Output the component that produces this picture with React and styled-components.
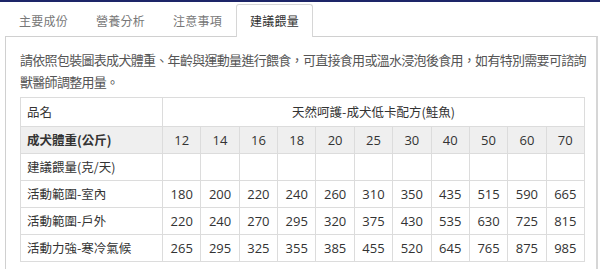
import React from 'react';
import styled, { createGlobalStyle } from 'styled-components';

const GlobalStyle = createGlobalStyle`
  html, body {
    margin: 0;
    padding: 0;
    background: #fff;
  }
  body {
    font-family: "Noto Sans CJK TC", sans-serif;
    color: #333;
  }
`;

const tabs = ['主要成份', '營養分析', '注意事項', '建議餵量'];
const weights = [12, 14, 16, 18, 20, 25, 30, 40, 50, 60, 70];
const rows = [
  { label: '活動範圍-室內', values: [180, 200, 220, 240, 260, 310, 350, 435, 515, 590, 665] },
  { label: '活動範圍-戶外', values: [220, 240, 270, 295, 320, 375, 430, 535, 630, 725, 815] },
  { label: '活動力強-寒冷氣候', values: [265, 295, 325, 355, 385, 455, 520, 645, 765, 875, 985] },
];

function App() {
  return (
    <Page>
      <GlobalStyle />
      <TopBar />
      <Content>
        <TabList>
          {tabs.map((t, i) => (
            <Tab key={t} $active={i === tabs.length - 1}>{t}</Tab>
          ))}
        </TabList>
        <Panel>
          <Intro>
            <IntroLine>請依照包裝圖表成犬體重、年齡與運動量進行餵食，可直接食用或溫水浸泡後食用，如有特別需要可諮詢</IntroLine>
            <IntroLine>獸醫師調整用量。</IntroLine>
          </Intro>
          <Table>
            <colgroup>
              <col style={{ width: 142 }} />
              {weights.map((w) => <col key={w} />)}
            </colgroup>
            <tbody>
              <tr>
                <LabelCell>品名</LabelCell>
                <TitleCell colSpan={weights.length}>天然呵護-成犬低卡配方(鮭魚)</TitleCell>
              </tr>
              <HeadRow>
                <LabelCell $bold>成犬體重(公斤)</LabelCell>
                {weights.map((w) => <NumCell key={w}>{w}</NumCell>)}
              </HeadRow>
              <tr>
                <LabelCell>建議餵量(克/天)</LabelCell>
                {weights.map((w) => <NumCell key={w} />)}
              </tr>
              {rows.map((r) => (
                <tr key={r.label}>
                  <LabelCell>{r.label}</LabelCell>
                  {r.values.map((v, i) => <NumCell key={i}>{v}</NumCell>)}
                </tr>
              ))}
            </tbody>
          </Table>
        </Panel>
      </Content>
    </Page>
  );
}

const Page = styled.div`
  width: 600px;
  height: 269px;
  overflow: hidden;
`;

const TopBar = styled.div`
  height: 2px;
  background: #1d2568;
`;

const Content = styled.div`
  padding: 2px 0 0 5px;
`;

const TabList = styled.div`
  display: flex;
  height: 32px;
`;

const Tab = styled.div`
  width: 77px;
  box-sizing: border-box;
  display: flex;
  align-items: center;
  justify-content: center;
  font-size: 12px;
  line-height: 16px;
  letter-spacing: 0.3px;
  color: ${(p) => (p.$active ? '#333' : '#777')};
  background: ${(p) => (p.$active ? '#fff' : 'transparent')};
  border: 1px solid ${(p) => (p.$active ? '#d6d6d6' : 'transparent')};
  border-bottom: none;
  border-radius: 3px 3px 0 0;
  margin-bottom: -1px;
  position: relative;
  z-index: 1;
`;

const Panel = styled.div`
  width: 593px;
  box-sizing: border-box;
  border: 1px solid #d0d0d0;
  border-right: 2px solid #d6d6d6;
  padding: 12px 8px 20px 14px;
  height: 240px;
`;

const Intro = styled.div`
  margin: 0 0 4px;
  font-size: 13px;
  line-height: 22px;
  color: #555;
`;

const IntroLine = styled.div`
  white-space: nowrap;
  letter-spacing: -0.7px;
`;

const Table = styled.table`
  width: 565px;
  border-collapse: collapse;
  table-layout: fixed;
  font-size: 12.5px;
  line-height: 16px;
  color: #333;
`;

const HeadRow = styled.tr`
  background: #efefef;
`;

const LabelCell = styled.td`
  height: 26px;
  padding: 0 6px;
  border: 1px solid #dcdcdc;
  white-space: nowrap;
  font-weight: ${(p) => (p.$bold ? 700 : 400)};
`;

const TitleCell = styled.td`
  height: 26px;
  border: 1px solid #dcdcdc;
  text-align: center;
`;

const NumCell = styled.td`
  height: 26px;
  padding: 0;
  border: 1px solid #dcdcdc;
  text-align: center;
  font-family: "Open Sans", "Noto Sans CJK TC", sans-serif;
  font-size: 13px;
`;

export default App;
